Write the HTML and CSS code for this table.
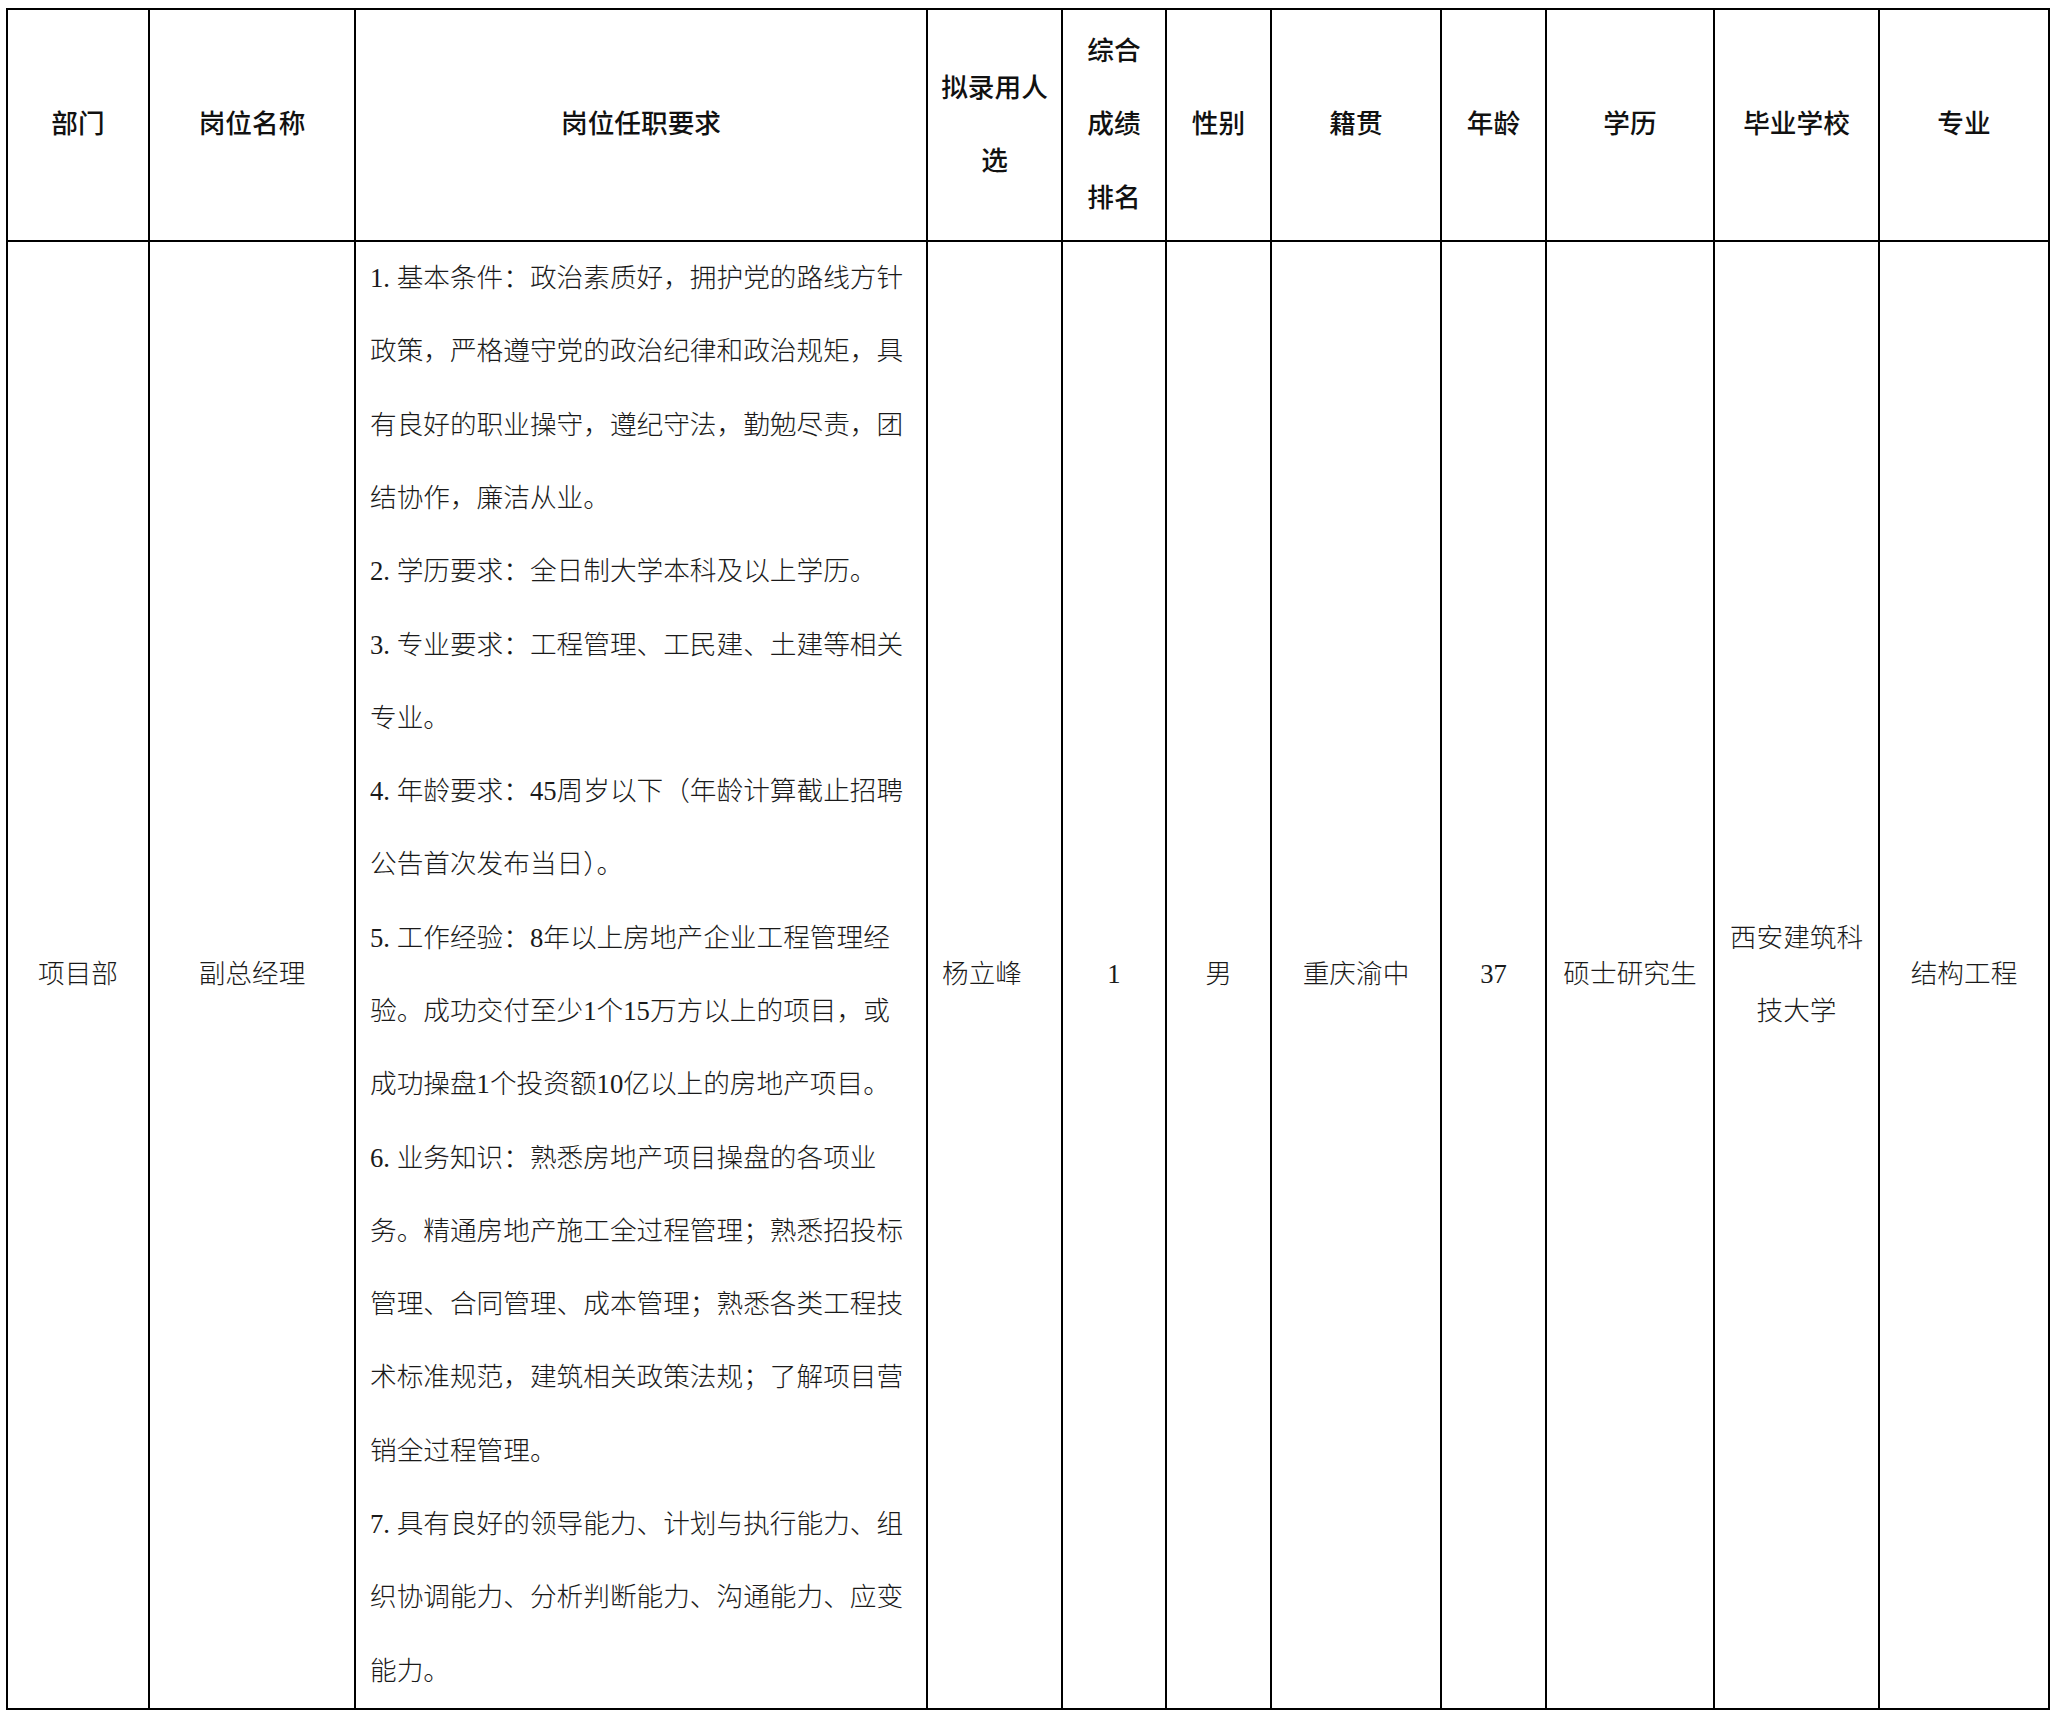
FILE: index.html
```html
<!DOCTYPE html>
<html lang="zh-CN">
<head>
<meta charset="utf-8">
<title>拟录用人选</title>
<link rel="stylesheet" href="styles.css">
</head>
<body>
<div class="sheet">
  <div class="cell head">部门</div>
  <div class="cell head">岗位名称</div>
  <div class="cell head">岗位任职要求</div>
  <div class="cell head">拟录用人<br>选</div>
  <div class="cell head">综合<br>成绩<br>排名</div>
  <div class="cell head">性别</div>
  <div class="cell head">籍贯</div>
  <div class="cell head">年龄</div>
  <div class="cell head">学历</div>
  <div class="cell head">毕业学校</div>
  <div class="cell head">专业</div>

  <div class="cell data">项目部</div>
  <div class="cell data">副总经理</div>
  <div class="cell req">
    <p class="item">1. 基本条件：政治素质好，拥护党的路线方针<br>政策，严格遵守党的政治纪律和政治规矩，具<br>有良好的职业操守，遵纪守法，勤勉尽责，团<br>结协作，廉洁从业。</p>
    <p class="item">2. 学历要求：全日制大学本科及以上学历。</p>
    <p class="item">3. 专业要求：工程管理、工民建、土建等相关<br>专业。</p>
    <p class="item">4. 年龄要求：45周岁以下（年龄计算截止招聘<br>公告首次发布当日）。</p>
    <p class="item">5. 工作经验：8年以上房地产企业工程管理经<br>验。成功交付至少1个15万方以上的项目，或<br>成功操盘1个投资额10亿以上的房地产项目。</p>
    <p class="item">6. 业务知识：熟悉房地产项目操盘的各项业<br>务。精通房地产施工全过程管理；熟悉招投标<br>管理、合同管理、成本管理；熟悉各类工程技<br>术标准规范，建筑相关政策法规；了解项目营<br>销全过程管理。</p>
    <p class="item">7. 具有良好的领导能力、计划与执行能力、组<br>织协调能力、分析判断能力、沟通能力、应变<br>能力。</p>
  </div>
  <div class="cell data left">杨立峰</div>
  <div class="cell data">1</div>
  <div class="cell data">男</div>
  <div class="cell data">重庆渝中</div>
  <div class="cell data">37</div>
  <div class="cell data">硕士研究生</div>
  <div class="cell data">西安建筑科<br>技大学</div>
  <div class="cell data">结构工程</div>
</div>
</body>
</html>
```

FILE: styles.css
```css
html, body {
  margin: 0;
  padding: 0;
  background: #ffffff;
}

body {
  font-family: "Liberation Serif", "Noto Sans CJK SC", serif;
  color: #1a1a1a;
}

.sheet {
  box-sizing: border-box;
  display: grid;
  width: 2044px;
  margin: 8px 0 0 6px;
  padding: 2px;
  gap: 2px;
  background: #000000;
  grid-template-columns: 140px 204px 570px 133px 102px 103px 168px 103px 166px 163px 168px;
  grid-template-rows: 230px 1466px;
}

.cell {
  background: #ffffff;
  display: flex;
  align-items: center;
  justify-content: center;
  text-align: center;
  font-size: 26.67px;
  line-height: 73.3px;
  font-weight: 300;
  white-space: nowrap;
}

.head {
  font-weight: 500;
  color: #111111;
}

.data.left {
  justify-content: flex-start;
  text-align: left;
  padding-left: 14px;
}

.req {
  flex-direction: column;
  align-items: flex-start;
  justify-content: center;
  text-align: left;
  padding-left: 14px;
}

.item {
  margin: 0;
}
```
